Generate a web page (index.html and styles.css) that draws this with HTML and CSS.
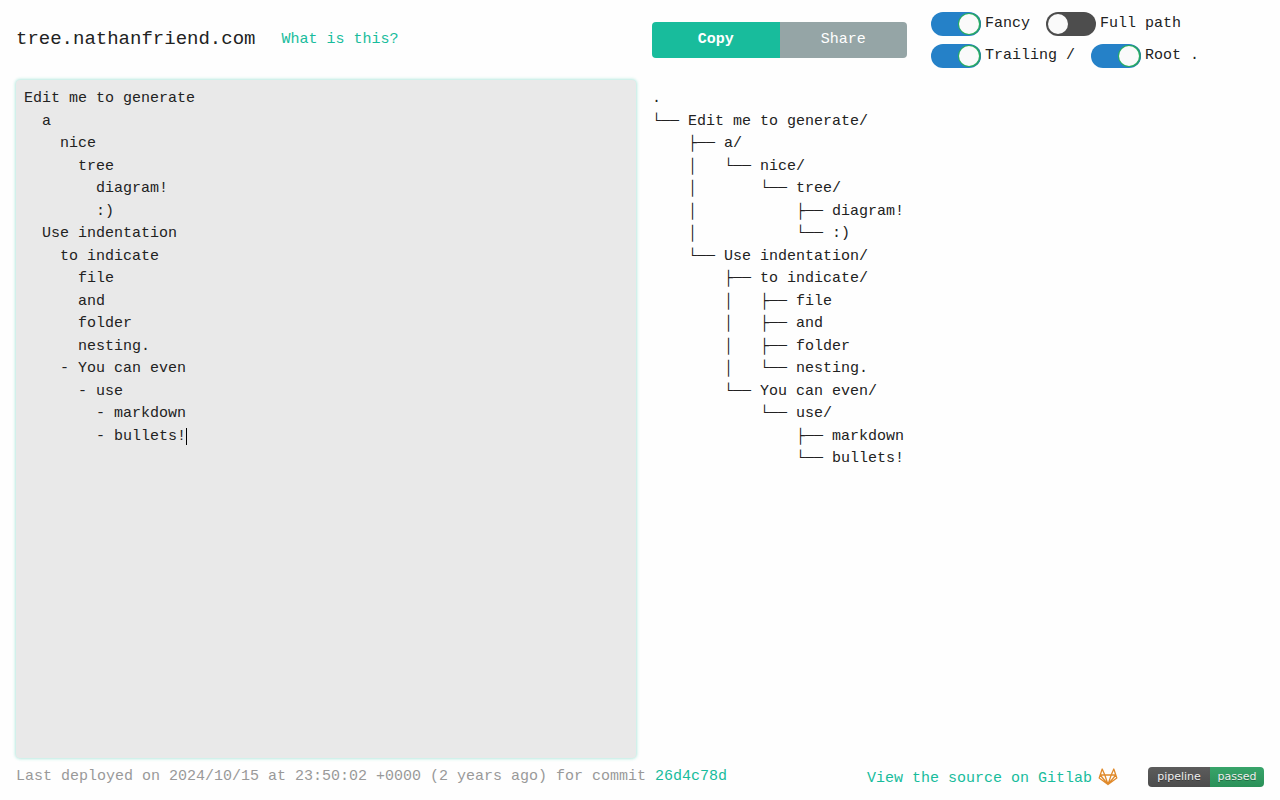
FILE: index.html
```
<!DOCTYPE html>
<html lang="en">
<head>
    <meta charset="UTF-8">
    <meta name="viewport" content="width=device-width, initial-scale=1.0">
    <title>tree.nathanfriend.com</title>
    <link rel="stylesheet" href="styles.css">
</head>
<body>
    <header class="header">
        <div class="header-left">
            <h1>tree.nathanfriend.com</h1>
            <a href="#about">What is this?</a>
        </div>
        <div class="header-right">
            <div class="button-group">
                <button type="button" class="btn-copy">Copy</button>
                <button type="button" class="btn-share">Share</button>
            </div>
            <div class="options">
                <label class="toggle"><input type="checkbox" id="fancy" checked><span>Fancy</span></label>
                <label class="toggle"><input type="checkbox" id="full-path"><span>Full path</span></label>
                <label class="toggle"><input type="checkbox" id="trailing-slash" checked><span>Trailing /</span></label>
                <label class="toggle"><input type="checkbox" id="root-dot" checked><span>Root .</span></label>
            </div>
        </div>
    </header>

    <main class="editor">
        <div class="source">
            <textarea id="source" aria-label="Tree source" spellcheck="false">Edit me to generate
  a
    nice
      tree
        diagram!
        :)
  Use indentation
    to indicate
      file
      and
      folder
      nesting.
    - You can even
      - use
        - markdown
        - bullets!</textarea>
            <span class="cursor" id="cursor"></span>
        </div>
        <pre id="tree">.
└── Edit me to generate/
    ├── a/
    │   └── nice/
    │       └── tree/
    │           ├── diagram!
    │           └── :)
    └── Use indentation/
        ├── to indicate/
        │   ├── file
        │   ├── and
        │   ├── folder
        │   └── nesting.
        └── You can even/
            └── use/
                ├── markdown
                └── bullets!</pre>
    </main>

    <footer class="footer">
        <p class="deployed">Last deployed on 2024/10/15 at 23:50:02 +0000 (2 years ago) for commit <a href="#commit">26d4c78d</a></p>
        <div class="footer-links">
            <a href="#source-code" class="gitlab-link"><span>View the source on Gitlab</span>
                <svg class="gitlab-icon" viewBox="0 0 20 18" aria-hidden="true">
                    <path d="M10 16.500 1.200 10 4.200 1 6.800 7h6.400L15.800 1l3 9zM2.200 7h4.600L10 16.500 13.200 7h4.600M2.200 7 10 16.500 17.800 7"/>
                </svg>
            </a>
            <a href="#pipeline" class="badge"><span class="badge-name">pipeline</span><span class="badge-status">passed</span></a>
        </div>
    </footer>

    <script>
        var source = document.getElementById('source');
        var cursor = document.getElementById('cursor');

        // Place the drawn cursor at the current text position
        function moveCursor() {
            var lines = source.value.slice(0, source.selectionStart).split('\n');
            cursor.style.setProperty('--row', lines.length - 1);
            cursor.style.setProperty('--col', lines[lines.length - 1].length);
        }

        // Start at the end of the text
        source.focus();
        source.setSelectionRange(source.value.length, source.value.length);
        moveCursor();
        document.addEventListener('selectionchange', moveCursor);
        source.addEventListener('input', moveCursor);
    </script>
</body>
</html>
```
FILE: styles.css
```
* {
    box-sizing: border-box;
}
body {
    margin: 0;
    min-height: 100vh;
    display: flex;
    flex-direction: column;
    background-color: #fefefe;
    color: #222;
    font-family: "Liberation Mono", monospace;
    font-size: 15px;
    line-height: 1.5;
}
a {
    color: #18bc9c;
    text-decoration: none;
}
a:hover {
    text-decoration: underline;
}

/* Header */
.header {
    display: grid;
    grid-template-columns: 1fr 1fr;
    align-items: center;
    gap: 16px;
    padding: 12px 8px 12px 16px;
}
.header-left {
    display: flex;
    align-items: center;
    gap: 26px;
}
.header-left h1 {
    margin: 0;
    padding-bottom: 2px;
    font-size: 19px;
    font-weight: normal;
}
.header-right {
    display: flex;
    align-items: center;
    gap: 24px;
}
.button-group {
    display: flex;
    flex: none;
    width: 255px;
    border-radius: 4px;
    overflow: hidden;
}
.button-group button {
    flex: 1;
    height: 36px;
    padding: 0 8px;
    border: none;
    color: #fff;
    font: inherit;
    cursor: pointer;
}
.button-group .btn-copy {
    background-color: #18bc9c;
    font-weight: bold;
}
.button-group .btn-share {
    background-color: #95a5a6;
}

/* Toggle switches */
.options {
    display: flex;
    flex-wrap: wrap;
    gap: 8px 16px;
}
.toggle {
    display: flex;
    gap: 4px;
    height: 24px;
    line-height: 24px;
    cursor: pointer;
}
.toggle input {
    appearance: none;
    flex: none;
    display: flex;
    width: 50px;
    height: 24px;
    margin: 0;
    padding: 2px;
    border-radius: 12px;
    background-color: #4d4d4d;
    overflow: hidden;
    cursor: pointer;
}
.toggle input::before {
    content: "";
    width: 20px;
    height: 20px;
    border-radius: 50%;
    background-color: #fafafa;
}
.toggle input:checked {
    justify-content: flex-end;
    background-color: #2581c8;
}
.toggle input:checked::before {
    box-shadow: 0 0 0 1px #27ae60, 2px 0 0 1px #2a8f8a;
}

/* Source and generated tree */
.editor {
    flex: 1;
    display: grid;
    grid-template-columns: 1fr 1fr;
    gap: 16px;
    padding: 0 8px 0 16px;
}
.source {
    position: relative;
    display: flex;
}
.source textarea {
    flex: 1;
    padding: 8px;
    border: none;
    border-radius: 4px;
    outline: none;
    resize: none;
    background-color: #e9e9e9;
    color: inherit;
    font: inherit;
    caret-color: transparent;
}
.source textarea:focus {
    box-shadow: 0 0 3px 1px rgba(24, 188, 156, 0.3);
}
.cursor {
    position: absolute;
    top: calc(10px + var(--row, 0) * 1.5em);
    left: calc(8px + var(--col, 0) * 1ch);
    width: 1px;
    height: 17px;
    background-color: #000;
    pointer-events: none;
}
.editor pre {
    margin: 0;
    padding: 8px 0;
    font: inherit;
}

/* Footer */
.footer {
    display: flex;
    justify-content: space-between;
    align-items: center;
    padding: 6px 16px 10px;
}
.deployed {
    margin: 0;
    color: #999;
}
.footer-links {
    display: flex;
    align-items: center;
    gap: 30px;
}
.gitlab-link {
    display: flex;
    align-items: center;
    gap: 6px;
}
.gitlab-link span {
    padding-top: 4px;
}
.gitlab-icon {
    width: 20px;
    height: 18px;
    fill: none;
    stroke: #e08a2b;
    stroke-width: 1.3;
    stroke-linejoin: round;
}
.badge {
    display: flex;
    height: 20px;
    border-radius: 4px;
    overflow: hidden;
    color: #eee;
    font: 11px/20px "DejaVu Sans", sans-serif;
    text-align: center;
    text-shadow: 0 1px rgba(0, 0, 0, 0.3);
}
.badge-name {
    width: 62px;
    background: linear-gradient(#5c5c5c, #4c4c4c);
}
.badge-status {
    width: 54px;
    background: linear-gradient(#38a46a, #2a9058);
}
```
